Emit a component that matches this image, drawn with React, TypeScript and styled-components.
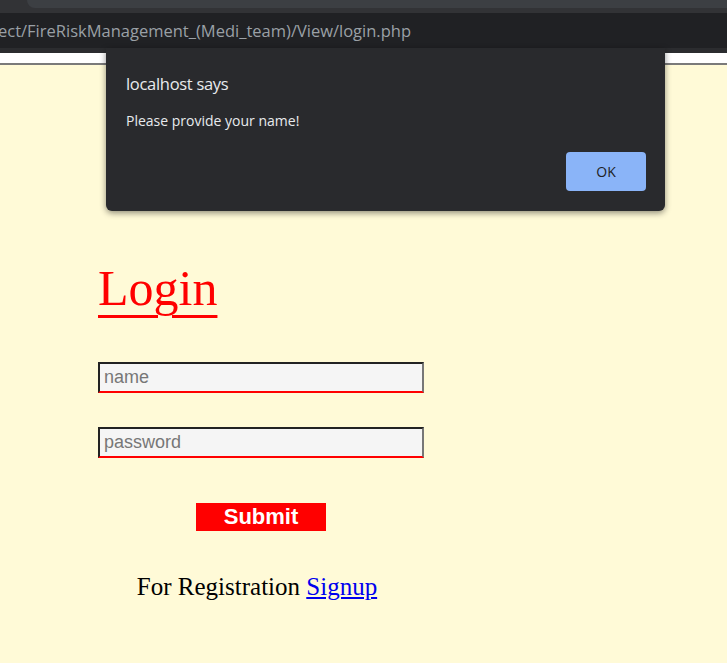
import React from "react";
import styled, { createGlobalStyle } from "styled-components";

const Global = createGlobalStyle`
  html, body { margin: 0; padding: 0; background: #fffad7; }
  body { width: 727px; height: 663px; overflow: hidden; position: relative; }
  #root { position: relative; }
`;

const Chrome = styled.div`
  display: flex;
  flex-direction: column;
`;

const TabStrip = styled.div`
  height: 13px;
  background: #323336;
  display: flex;
  justify-content: flex-end;
`;

const Tab = styled.div`
  width: 700px;
  height: 8px;
  background: #3c3f43;
  border-bottom-left-radius: 8px;
`;

const AddressBar = styled.div`
  height: 35px;
  background: #202124;
  display: flex;
  align-items: center;
  overflow: hidden;
`;

const Url = styled.span`
  font-family: "Open Sans", "Noto Sans", sans-serif;
  font-size: 16.5px;
  color: #9aa0a6;
  margin-left: -2px;
  white-space: nowrap;
`;

const ToolbarEdge = styled.div`
  height: 5px;
  background: #2b2c2f;
`;

const PageTop = styled.div`
  height: 10px;
  background: #ffffff;
  border-bottom: 2px solid #7a7a7a;
`;

const Content = styled.main`
  padding: 0 0 0 98px;
`;

const Form = styled.form`
  width: 326px;
  display: flex;
  flex-direction: column;
  padding-top: 195px;
`;

const Title = styled.h1`
  margin: 0 0 46px 0;
  font-family: "Liberation Serif", "Times New Roman", serif;
  font-weight: normal;
  font-size: 50px;
  line-height: 56px;
  color: #ff0000;
  text-decoration: underline;
  text-decoration-thickness: 3px;
  text-underline-offset: 10px;
  align-self: flex-start;
`;

const Field = styled.input`
  box-sizing: border-box;
  width: 326px;
  height: 31px;
  margin: 0 0 34px 0;
  padding: 0 4px;
  background: #f5f5f5;
  border-style: solid;
  border-width: 2px;
  border-color: #222222 #777777 #ff0000 #222222;
  font-family: "Liberation Sans", Arial, sans-serif;
  font-size: 18px;
  color: #222;
  outline: none;
  &::placeholder { color: #777777; }
`;

const SubmitButton = styled.button`
  align-self: center;
  width: 130px;
  height: 28px;
  margin-top: 11px;
  background: #ff0000;
  border: none;
  color: #ffffff;
  font-family: "Liberation Sans", Arial, sans-serif;
  font-weight: bold;
  font-size: 22px;
  line-height: 28px;
  padding: 0;
`;

const Register = styled.p`
  margin: 42px 0 0 0;
  padding-right: 8px;
  text-align: center;
  font-family: "Liberation Serif", "Times New Roman", serif;
  font-size: 25px;
  color: #000;
`;

const SignupLink = styled.a`
  color: #0000ee;
  text-decoration: underline;
`;

const Dialog = styled.div`
  position: absolute;
  left: 106px;
  top: 48px;
  width: 559px;
  height: 163px;
  box-sizing: border-box;
  background: #292a2d;
  border-radius: 0 0 6px 6px;
  box-shadow: 0 2px 6px rgba(0, 0, 0, 0.45);
  padding: 24px 19px 20px 20px;
  display: flex;
  flex-direction: column;
  font-family: "Open Sans", "Noto Sans", sans-serif;
`;

const DialogTitle = styled.div`
  font-size: 16.5px;
  color: #e8eaed;
  line-height: 24px;
  letter-spacing: -0.3px;
`;

const DialogMessage = styled.div`
  margin-top: 15px;
  font-size: 14px;
  color: #e8eaed;
  line-height: 20px;
`;

const DialogActions = styled.div`
  margin-top: auto;
  display: flex;
  justify-content: flex-end;
`;

const OkButton = styled.button`
  width: 80px;
  height: 39px;
  background: #8ab4f8;
  border: none;
  border-radius: 4px;
  color: #202124;
  font-family: "Open Sans", "Noto Sans", sans-serif;
  font-size: 14px;
  padding: 0;
`;

export default function App() {
  return (
    <>
      <Global />
      <Chrome>
        <TabStrip>
          <Tab />
        </TabStrip>
        <AddressBar>
          <Url>ect/FireRiskManagement_(Medi_team)/View/login.php</Url>
        </AddressBar>
        <ToolbarEdge />
      </Chrome>
      <PageTop />
      <Content>
        <Form onSubmit={(e) => e.preventDefault()}>
          <Title>Login</Title>
          <Field type="text" placeholder="name" />
          <Field type="password" placeholder="password" />
          <SubmitButton type="submit">Submit</SubmitButton>
          <Register>
            For Registration <SignupLink href="#">Signup</SignupLink>
          </Register>
        </Form>
      </Content>
      <Dialog>
        <DialogTitle>localhost says</DialogTitle>
        <DialogMessage>Please provide your name!</DialogMessage>
        <DialogActions>
          <OkButton>OK</OkButton>
        </DialogActions>
      </Dialog>
    </>
  );
}
